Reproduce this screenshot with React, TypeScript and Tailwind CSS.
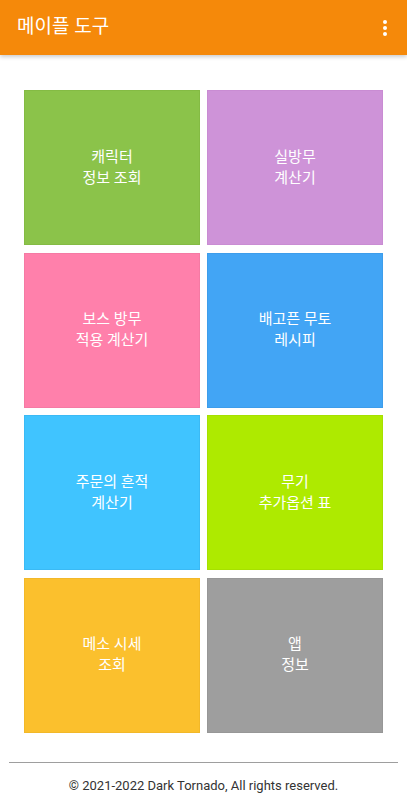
const tiles = [
  { lines: ["캐릭터", "정보 조회"], cls: "bg-[#8bc34a] border-[#84bb44]" },
  { lines: ["실방무", "계산기"], cls: "bg-[#ce93d8] border-[#c98cd3]" },
  { lines: ["보스 방무", "적용 계산기"], cls: "bg-[#ff80ab] border-[#f57aa4]" },
  { lines: ["배고픈 무토", "레시피"], cls: "bg-[#42a5f5] border-[#3d9deb]" },
  { lines: ["주문의 흔적", "계산기"], cls: "bg-[#40c4ff] border-[#3bbaf5]" },
  { lines: ["무기", "추가옵션 표"], cls: "bg-[#aeea00] border-[#a6e000]" },
  { lines: ["메소 시세", "조회"], cls: "bg-[#fbc02d] border-[#f2b829]" },
  { lines: ["앱", "정보"], cls: "bg-[#9e9e9e] border-[#979797]" },
];

export default function App() {
  return (
    <div className="w-[407px] h-[800px] bg-white flex flex-col font-['Roboto','Noto_Sans_CJK_KR',sans-serif]">
      <header className="h-[55px] shrink-0 bg-[#f5890a] flex items-center justify-between pl-[17px] pr-[19px] shadow-[0_2px_4px_rgba(0,0,0,0.2)] relative z-10">
        <h1 className="text-white text-[19px] font-normal">메이플 도구</h1>
        <svg width="6" height="18" viewBox="0 0 6 18" className="fill-white">
          <circle cx="3" cy="3" r="2" />
          <circle cx="3" cy="9" r="2" />
          <circle cx="3" cy="15" r="2" />
        </svg>
      </header>
      <main className="px-[24px] pt-[35px]">
        <div className="grid grid-cols-2 gap-x-[7px] gap-y-[7.5px]">
          {tiles.map((t, i) => (
            <div
              key={i}
              className={`h-[155px] border flex flex-col items-center justify-center text-white text-[15px] leading-[21px] ${t.cls}`}
            >
              {t.lines.map((l) => (
                <span key={l}>{l}</span>
              ))}
            </div>
          ))}
        </div>
      </main>
      <footer className="mt-auto px-[9px] pb-[5px]">
        <hr className="border-t border-[#9e9e9e]" />
        <p className="text-center text-[13px] text-[#333] mt-[13px]">
          © 2021-2022 Dark Tornado, All rights reserved.
        </p>
      </footer>
    </div>
  );
}
